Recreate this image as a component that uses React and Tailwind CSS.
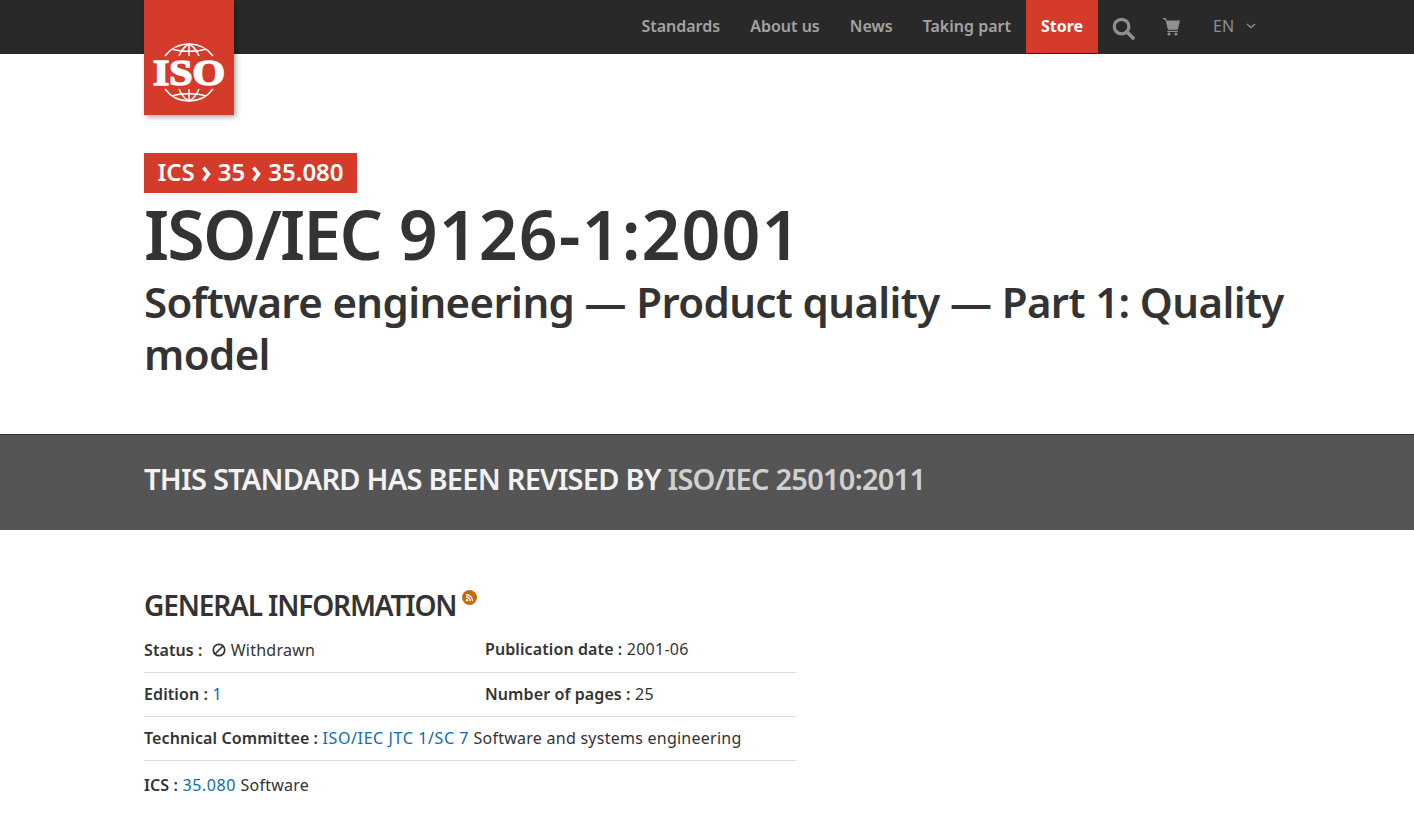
const NAV_LINKS = ['Standards', 'About us', 'News', 'Taking part'];

function IsoLogo() {
  return (
    <svg width="74" height="60" viewBox="0 0 74 60" fill="none" stroke="#fff" strokeWidth="1.5">
      <path d="M13 13 C 19 5, 28 1, 37 1 C 46 1, 55 5, 61 13" />
      <path d="M20 6 C 29 9, 45 9, 54 6" />
      <path d="M27 13 C 29 8, 33 3, 37 1 C 41 3, 45 8, 47 13" />
      <path d="M37 1 V13" />
      <path d="M13 46 C 19 54, 28 58, 37 58 C 46 58, 55 54, 61 46" />
      <path d="M20 53 C 29 50, 45 50, 54 53" />
      <path d="M27 46 C 29 51, 33 56, 37 58 C 41 56, 45 51, 47 46" />
      <path d="M37 46 V58" />
      <text x="37" y="41.5" textAnchor="middle" fill="#fff" stroke="#fff" strokeWidth="1.5" fontFamily="'Liberation Serif', serif" fontWeight="700" fontSize="35" textLength="72" lengthAdjust="spacingAndGlyphs">ISO</text>
    </svg>
  );
}

function SearchIcon() {
  return (
    <svg width="23" height="23" viewBox="0 0 24 24" fill="none" stroke="#8f8f8f" strokeWidth="3.4">
      <circle cx="10" cy="10" r="7.6" />
      <path d="M15.5 15.5 L22 22" strokeLinecap="round" strokeWidth="3.8" />
    </svg>
  );
}

function CartIcon() {
  return (
    <svg width="18" height="18" viewBox="0 0 18 18" fill="#8f8f8f">
      <path d="M0 0 H3.6 L4.6 2.6 H18 L15.8 11.8 H6 L3.6 2.6 Z" />
      <path d="M5.4 12.8 H15.8 V14 H5.4 Z" />
      <circle cx="7" cy="16" r="1.6" />
      <circle cx="14" cy="16" r="1.6" />
    </svg>
  );
}

function LangCaret() {
  return (
    <svg width="10" height="6" viewBox="0 0 10 6" fill="none" stroke="#8f8f8f" strokeWidth="1.4">
      <path d="M1 1 L5 4.5 L9 1" />
    </svg>
  );
}

function Crumb() {
  return (
    <svg width="9" height="16" viewBox="0 0 9 16" fill="none" stroke="#fff" strokeWidth="3.6" className="mt-[3px]">
      <path d="M1.5 1.5 L6.5 8 L1.5 14.5" />
    </svg>
  );
}

function WithdrawnIcon() {
  return (
    <svg width="14" height="14" viewBox="0 0 14 14" fill="none" stroke="#333" strokeWidth="1.7">
      <circle cx="7" cy="7" r="5.7" />
      <path d="M3 11 L11 3" />
    </svg>
  );
}

function RssBadge() {
  return (
    <svg width="15" height="15" viewBox="0 0 15 15" className="ml-[6px] mt-[-15px]">
      <circle cx="7.5" cy="7.5" r="7.5" fill="#c76a0c" />
      <circle cx="5" cy="10.2" r="1.2" fill="#fff" />
      <path d="M4 7 A4 4 0 0 1 8.2 11.2 M4 4.6 A6.5 6.5 0 0 1 10.6 11.2" fill="none" stroke="#fff" strokeWidth="1.3" />
    </svg>
  );
}

function InfoRow({ children, border = true, className = '' }) {
  return (
    <div className={`flex items-center ${border ? 'border-b border-[#dcdcdc]' : ''} ${className}`}>
      {children}
    </div>
  );
}

function Label({ children }) {
  return <b className="font-semibold tracking-[0.1px]">{children}</b>;
}

function Ref({ children }) {
  return <span className="tracking-[0.6px] text-[#0f6bab]">{children}</span>;
}

export default function App() {
  return (
    <div className="h-[840px] overflow-hidden bg-white text-[#333] font-['Noto_Sans',sans-serif]">
      {/* Top bar */}
      <header className="h-[54px] bg-[#292929]">
        <div className="relative flex h-[53px] items-center justify-end pl-[144px] pr-[144px]">
          <a className="absolute left-[144px] top-0 z-10 flex h-[115px] w-[90px] items-end justify-center bg-[#d43b2b] pb-[12px] shadow-[2px_2px_5px_rgba(0,0,0,0.35)]">
            <IsoLogo />
          </a>
          <nav className="flex h-full items-center">
            <div className="mt-[-2px] flex items-center gap-[30px] pr-[15px] text-[16px] font-semibold text-[#a3a3a3]">
              {NAV_LINKS.map((link) => (
                <span key={link}>{link}</span>
              ))}
            </div>
            <span className="flex h-full w-[72px] items-center justify-center bg-[#d43b2b] pb-[2px] text-[16px] font-bold text-white">Store</span>
            <span className="ml-[14px] flex w-[24px] pt-[3px]"><SearchIcon /></span>
            <span className="ml-[26px] flex w-[18px]"><CartIcon /></span>
            <span className="ml-[33px] mr-[14px] flex w-[43px] items-center justify-between pb-[2px] text-[16px] text-[#8f8f8f]">
              EN
              <LangCaret />
            </span>
          </nav>
        </div>
      </header>

      {/* Title block */}
      <section className="h-[380px] px-[144px] pt-[99px]">
        <div className="flex h-[40px] w-[213px] items-center justify-center gap-[7px] bg-[#d43b2b] pb-[2px] text-[24px] font-semibold text-white">
          <span>ICS</span><Crumb /><span>35</span><Crumb /><span>35.080</span>
        </div>
        <h1 className="mt-[-1px] h-[84px] text-[68px] font-semibold leading-[84px] text-[#333]">
          <span className="tracking-[-1.8px]">ISO/IEC</span> <span className="tracking-[1.1px]">9126-1:2001</span>
        </h1>
        <h2 className="w-[1160px] text-[42px] font-semibold leading-[52px] tracking-[-0.62px] text-[#333]">
          Software engineering — Product quality — Part 1: Quality model
        </h2>
      </section>

      {/* Revision banner */}
      <section className="flex h-[96px] items-center border-t border-[#333] bg-[#555] px-[144px] pb-[8px] text-[29px] font-semibold tracking-[-0.75px]">
        <span className="text-[#f2f2f2]">THIS STANDARD HAS BEEN REVISED BY&nbsp;</span>
        <span className="text-[#d0d0d0]">ISO/IEC 25010:2011</span>
      </section>

      {/* General information */}
      <section className="px-[144px] pt-[56px]">
        <div className="flex items-center">
          <h3 className="text-[28px] font-semibold leading-[38px] tracking-[-1.15px] text-[#333]">GENERAL INFORMATION</h3>
          <RssBadge />
        </div>
        <div className="mt-[4px] w-[652px] text-[16px] tracking-[0.25px]">
          <InfoRow className="h-[45px]">
            <div className="flex w-[341px] items-center">
              <Label>Status :</Label>
              <span className="ml-[9px] mr-[5px]"><WithdrawnIcon /></span>
              Withdrawn
            </div>
            <div className="pb-[2px]"><Label>Publication date :</Label> 2001-06</div>
          </InfoRow>
          <InfoRow className="h-[44px] pb-[2px]">
            <div className="w-[341px]"><Label>Edition :</Label> <Ref>1</Ref></div>
            <div><Label>Number of pages :</Label> 25</div>
          </InfoRow>
          <InfoRow className="h-[44px] pb-[2px]">
            <div><Label>Technical Committee :</Label> <Ref>ISO/IEC JTC 1/SC 7</Ref> Software and systems engineering</div>
          </InfoRow>
          <InfoRow border={false} className="h-[48px]">
            <div><Label>ICS :</Label> <Ref>35.080</Ref> Software</div>
          </InfoRow>
        </div>
      </section>
    </div>
  );
}
